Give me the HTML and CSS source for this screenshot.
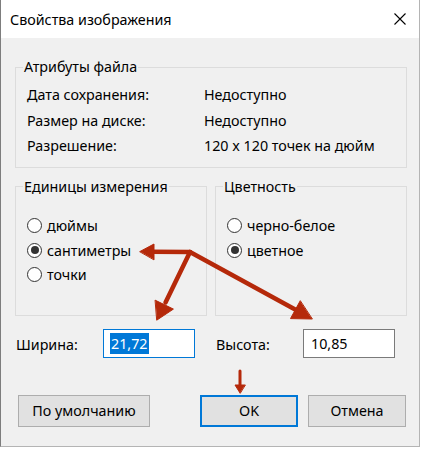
FILE: index.html
```html
<!DOCTYPE html>
<html lang="ru">
<head>
<meta charset="utf-8">
<title>Свойства изображения</title>
<link rel="stylesheet" href="styles.css">
</head>
<body>
<div class="window">
  <div class="titlebar">
    <span class="title">Свойства изображения</span>
    <span class="close" aria-label="Закрыть">
      <svg width="12" height="12" viewBox="0 0 12 12"><path d="M0.5 0.5 L11.5 11.5 M11.5 0.5 L0.5 11.5" stroke="#000" stroke-width="1.1" fill="none"/></svg>
    </span>
  </div>

  <div class="content">
    <fieldset class="group attrs">
      <legend>Атрибуты файла</legend>
      <div class="attr-grid">
        <span>Дата сохранения:</span><span>Недоступно</span>
        <span>Размер на диске:</span><span>Недоступно</span>
        <span>Разрешение:</span><span>120 x 120 точек на дюйм</span>
      </div>
    </fieldset>

    <div class="pair">
      <fieldset class="group options">
        <legend>Единицы измерения</legend>
        <label class="radio"><span class="dot"></span>дюймы</label>
        <label class="radio"><span class="dot checked"></span>сантиметры</label>
        <label class="radio"><span class="dot"></span>точки</label>
      </fieldset>
      <fieldset class="group options">
        <legend>Цветность</legend>
        <label class="radio"><span class="dot"></span>черно-белое</label>
        <label class="radio"><span class="dot checked"></span>цветное</label>
      </fieldset>
    </div>

    <div class="pair sizes">
      <div class="field">
        <span class="field-label">Ширина:</span>
        <span class="input focused"><span class="sel">21,72</span></span>
      </div>
      <div class="field">
        <span class="field-label">Высота:</span>
        <span class="input">10,85</span>
      </div>
    </div>

    <div class="buttons">
      <button class="btn default-btn">По умолчанию</button>
      <span class="spacer"></span>
      <button class="btn ok">OK</button>
      <button class="btn cancel">Отмена</button>
    </div>
  </div>

  <!-- annotation arrows drawn over the dialog -->
  <svg class="arrows" width="420" height="446" viewBox="0 0 420 446">
    <g fill="#b5290a" stroke="#b5290a" stroke-linecap="round">
      <line x1="190" y1="252" x2="151" y2="251.8" stroke-width="4.5"/>
      <polygon points="140,251.5 154,244 154,259.5" stroke-width="1"/>
      <line x1="190" y1="252" x2="165.5" y2="302.5" stroke-width="4.5"/>
      <polygon points="157,320 173.4,309.1 155.4,300.3" stroke-width="1"/>
      <line x1="190" y1="252" x2="297" y2="310.5" stroke-width="4.5"/>
      <polygon points="312,319 290.5,318.6 300.1,301" stroke-width="1"/>
      <line x1="240" y1="371" x2="240" y2="386" stroke-width="3"/>
      <polygon points="240,393 235,385 245,385" stroke-width="1"/>
    </g>
  </svg>
</div>
</body>
</html>
```

FILE: styles.css
```css
html, body {
  margin: 0;
  padding: 0;
  background: #ffffff;
}

body {
  font-family: "Noto Sans", "Open Sans", sans-serif;
  font-size: 14.3px;
  color: #000;
}

.window {
  position: relative;
  width: 420px;
  height: 447px;
  box-sizing: border-box;
  background: #f0f0f0;
  border-left: 1px solid #7d7d7d;
  border-right: 1px solid #b4b4b4;
  border-bottom: 1px solid #b4b4b4;
}

.titlebar {
  height: 38px;
  background: #ffffff;
  display: flex;
  align-items: center;
  justify-content: space-between;
  padding: 0 13px 0 9px;
}

.title {
  line-height: 20px;
  padding-top: 1px;
}

.close {
  display: flex;
  width: 12px;
  height: 12px;
}

.content {
  padding: 0 12px 0 14px;
}

.group {
  margin: 0;
  border: 1px solid #dcdcdc;
  min-width: 0;
  box-sizing: border-box;
}

.group legend {
  padding: 0 1px;
  margin-left: 0;
  line-height: 20px;
}

.attrs {
  margin-top: 19px;
  width: 392px;
  padding: 5px 0 8px 7px;
}

.attr-grid {
  display: grid;
  grid-template-columns: 177px 1fr;
  grid-auto-rows: 25.5px;
  align-items: center;
  padding-left: 4px;
}

.pair {
  display: flex;
  gap: 8px;
  width: 392px;
}

.pair > .options {
  margin-top: 9px;
  width: 192px;
  height: 139px;
  padding: 17px 0 0 7px;
}

.radio {
  display: flex;
  align-items: center;
  height: 24.5px;
  padding-left: 4px;
}

.dot {
  width: 15px;
  height: 15px;
  box-sizing: border-box;
  border: 1px solid #333;
  border-radius: 50%;
  background: #fff;
  margin-right: 5px;
  display: flex;
  align-items: center;
  justify-content: center;
}

.dot.checked::after {
  content: "";
  width: 8px;
  height: 8px;
  border-radius: 50%;
  background: #333;
}

.sizes {
  margin-top: 13px;
}

.field {
  width: 192px;
  display: flex;
  align-items: center;
}

.field-label {
  width: 87px;
  padding-left: 1px;
  padding-top: 2px;
}

.input {
  width: 92px;
  height: 29px;
  box-sizing: border-box;
  background: #fff;
  border: 1px solid #7a7a7a;
  display: flex;
  align-items: center;
  padding-left: 7px;
  line-height: 21px;
}

.input.focused {
  border-color: #0078d7;
  padding-left: 6px;
}

.sel {
  background: #0078d7;
  color: #fff;
  padding: 0 1px;
}

.buttons {
  display: flex;
  margin-top: 37px;
  width: 392px;
}

.btn {
  font: inherit;
  color: #000;
  height: 32px;
  box-sizing: border-box;
  background: #e1e1e1;
  border: 1px solid #adadad;
  padding: 0;
  border-radius: 0;
}

.default-btn {
  width: 132px;
  margin-left: 3px;
}

.spacer {
  flex: 1;
}

.ok {
  width: 98px;
  border: 2px solid #0078d7;
}

.cancel {
  width: 98px;
  margin-left: 10px;
  margin-right: 1px;
}

.arrows {
  position: absolute;
  left: -1px;
  top: 0;
  pointer-events: none;
}
```
